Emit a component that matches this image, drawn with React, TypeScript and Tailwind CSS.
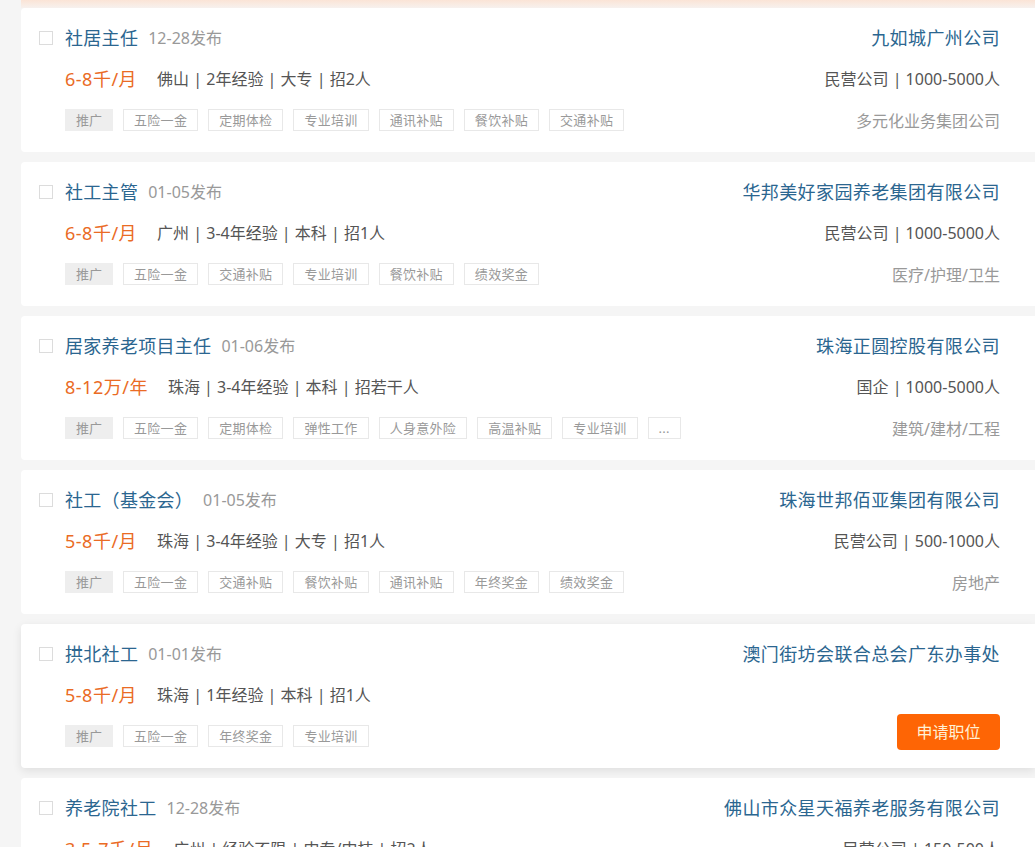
import React from "react";

type Job = {
  title: string;
  date: string;
  salary: string;
  info: string;
  tags: string[];
  company: string;
  meta?: string;
  industry?: string;
  hovered?: boolean;
};

const jobs: Job[] = [
  {
    title: "社居主任",
    date: "12-28发布",
    salary: "6-8千/月",
    info: "佛山 | 2年经验 | 大专 | 招2人",
    tags: ["五险一金", "定期体检", "专业培训", "通讯补贴", "餐饮补贴", "交通补贴"],
    company: "九如城广州公司",
    meta: "民营公司 | 1000-5000人",
    industry: "多元化业务集团公司",
  },
  {
    title: "社工主管",
    date: "01-05发布",
    salary: "6-8千/月",
    info: "广州 | 3-4年经验 | 本科 | 招1人",
    tags: ["五险一金", "交通补贴", "专业培训", "餐饮补贴", "绩效奖金"],
    company: "华邦美好家园养老集团有限公司",
    meta: "民营公司 | 1000-5000人",
    industry: "医疗/护理/卫生",
  },
  {
    title: "居家养老项目主任",
    date: "01-06发布",
    salary: "8-12万/年",
    info: "珠海 | 3-4年经验 | 本科 | 招若干人",
    tags: ["五险一金", "定期体检", "弹性工作", "人身意外险", "高温补贴", "专业培训", "..."],
    company: "珠海正圆控股有限公司",
    meta: "国企 | 1000-5000人",
    industry: "建筑/建材/工程",
  },
  {
    title: "社工（基金会）",
    date: "01-05发布",
    salary: "5-8千/月",
    info: "珠海 | 3-4年经验 | 大专 | 招1人",
    tags: ["五险一金", "交通补贴", "餐饮补贴", "通讯补贴", "年终奖金", "绩效奖金"],
    company: "珠海世邦佰亚集团有限公司",
    meta: "民营公司 | 500-1000人",
    industry: "房地产",
  },
  {
    title: "拱北社工",
    date: "01-01发布",
    salary: "5-8千/月",
    info: "珠海 | 1年经验 | 本科 | 招1人",
    tags: ["五险一金", "年终奖金", "专业培训"],
    company: "澳门街坊会联合总会广东办事处",
    hovered: true,
  },
  {
    title: "养老院社工",
    date: "12-28发布",
    salary: "3.5-7千/月",
    info: "广州 | 经验不限 | 中专/中技 | 招2人",
    tags: ["五险一金", "年终奖金", "专业培训"],
    company: "佛山市众星天福养老服务有限公司",
    meta: "民营公司 | 150-500人",
    industry: "医疗/护理/卫生",
  },
];

function Card({ job }: { job: Job }) {
  return (
    <div
      className={
        "h-[144px] mb-[10px] bg-white rounded-l-[4px] flex pl-[18px] pr-[35px] pt-[18px] " +
        (job.hovered ? "shadow-[0_3px_10px_rgba(0,0,0,0.09)]" : "")
      }
    >
      <div className="w-[14px] h-[14px] mt-[5px] border border-[#dcdcdc] bg-white shrink-0" />
      <div className="ml-[12px] flex-1 flex flex-col">
        <div className="flex items-center h-[24px]">
          <span className="text-[18px] text-[#2b6690] leading-[24px] tracking-[0.3px]">{job.title}</span>
          <span className="ml-[10px] text-[16px] text-[#999] leading-[24px]">{job.date}</span>
        </div>
        <div className="flex items-center h-[24px] mt-[17px]">
          <span className="text-[18px] text-[#ea6b25] leading-[24px] tracking-[0.5px]">{job.salary}</span>
          <span className="ml-[20px] text-[16px] text-[#555] leading-[24px]">{job.info}</span>
        </div>
        <div className="flex items-center mt-[18px] gap-[10px]">
          <span className="h-[22px] px-[11px] bg-[#eeeeee] text-[13px] text-[#999] leading-[22px]">推广</span>
          {job.tags.map((t, i) => (
            <span
              key={i}
              className="h-[22px] px-[10px] border border-[#e8e8e8] text-[13px] text-[#999] leading-[20px] tracking-[0.3px]"
            >
              {t}
            </span>
          ))}
        </div>
      </div>
      <div className="flex flex-col items-end">
        <div className="h-[24px] text-[18px] text-[#2b6690] leading-[24px] tracking-[0.4px]">{job.company}</div>
        {job.hovered ? (
          <button className="mt-[48px] w-[103px] h-[36px] rounded-[4px] bg-[#fe6505] text-[16px] text-[#fff1d6]">
            申请职位
          </button>
        ) : (
          <>
            <div className="h-[24px] mt-[17px] text-[16px] text-[#555] leading-[24px]">{job.meta}</div>
            <div className="h-[24px] mt-[18px] text-[16px] text-[#999] leading-[24px]">{job.industry}</div>
          </>
        )}
      </div>
    </div>
  );
}

export default function App() {
  return (
    <div
      className="w-[1035px] h-[847px] overflow-hidden bg-[#f5f5f5]"
      style={{ fontFamily: '"Noto Sans", "Noto Sans CJK SC", sans-serif' }}
    >
      <div className="h-[8px] ml-[21px] bg-gradient-to-b from-[#fbe4d6] to-[#f7f1ee]" />
      <div className="pl-[21px]">
        {jobs.map((j, i) => (
          <Card key={i} job={j} />
        ))}
      </div>
    </div>
  );
}
